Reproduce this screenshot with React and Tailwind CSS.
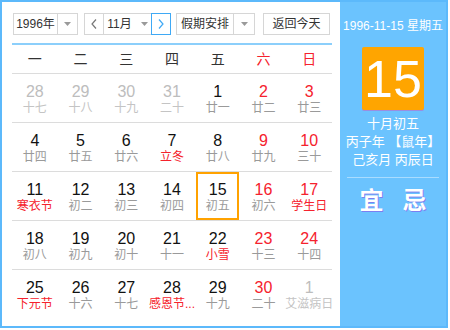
import React from "react";

const FONT = { fontFamily: '"Liberation Sans", "Noto Sans CJK SC", sans-serif' };

const rows = [
  [
    { d: "28", l: "十七", g: true },
    { d: "29", l: "十八", g: true },
    { d: "30", l: "十九", g: true },
    { d: "31", l: "二十", g: true },
    { d: "1", l: "廿一" },
    { d: "2", l: "廿二", w: true },
    { d: "3", l: "廿三", w: true },
  ],
  [
    { d: "4", l: "廿四" },
    { d: "5", l: "廿五" },
    { d: "6", l: "廿六" },
    { d: "7", l: "立冬", f: true },
    { d: "8", l: "廿八" },
    { d: "9", l: "廿九", w: true },
    { d: "10", l: "三十", w: true },
  ],
  [
    { d: "11", l: "寒衣节", f: true },
    { d: "12", l: "初二" },
    { d: "13", l: "初三" },
    { d: "14", l: "初四" },
    { d: "15", l: "初五", s: true },
    { d: "16", l: "初六", w: true },
    { d: "17", l: "学生日", w: true, f: true },
  ],
  [
    { d: "18", l: "初八" },
    { d: "19", l: "初九" },
    { d: "20", l: "初十" },
    { d: "21", l: "十一" },
    { d: "22", l: "小雪", f: true },
    { d: "23", l: "十三", w: true },
    { d: "24", l: "十四", w: true },
  ],
  [
    { d: "25", l: "下元节", f: true },
    { d: "26", l: "十六" },
    { d: "27", l: "十七" },
    { d: "28", l: "感恩节...", f: true },
    { d: "29", l: "十九" },
    { d: "30", l: "二十", w: true },
    { d: "1", l: "艾滋病日", g: true },
  ],
];

function Arrow() {
  return (
    <svg width="7" height="4" viewBox="0 0 7 4">
      <path d="M0 0 L7 0 L3.5 4 Z" fill="#9a9a9a" />
    </svg>
  );
}

function Cell({ c }) {
  const num = c.g ? "text-[#bdbdbd]" : c.w ? "text-[#f5222d]" : "text-[#111]";
  const lun = c.g ? "text-[#c4c4c4]" : c.f ? "text-[#f5222d]" : "text-[#9a9a9a]";
  return (
    <div className="flex justify-center">
      <div
        className={
          "flex flex-col items-center w-[43px] h-[48px] " +
          (c.s ? "border-2 border-[#ffa200] pt-[6px]" : "pt-[8px]")
        }
      >
        <div className={"text-[16px] leading-[19px] " + num}>{c.d}</div>
        <div className={"text-[12px] leading-[14px] whitespace-nowrap " + lun}>{c.l}</div>
      </div>
    </div>
  );
}

export default function App() {
  return (
    <div className="w-[450px] h-[330px] bg-white" style={FONT}>
      <div className="w-[448px] h-[328px] border-2 border-[#5cb9fb] flex">
        <div className="w-[338px] pl-[10px] pr-[8px] pt-[11px]">
          <div className="flex items-center h-[22px] text-[12px] text-[#333]">
            <div className="flex h-[22px] w-[65px] border border-[#d6d6d6] ml-[1px]">
              <div className="flex-1 flex items-center justify-center">1996年</div>
              <div className="w-[20px] border-l border-[#d6d6d6] flex items-center justify-center">
                <Arrow />
              </div>
            </div>
            <div className="flex h-[22px] w-[87px] border border-[#d6d6d6] ml-[6px]">
              <div className="w-[19px] flex items-center justify-center border-r border-[#d6d6d6]">
                <svg width="6" height="10" viewBox="0 0 6 10">
                  <path d="M5 0.5 L1 5 L5 9.5" fill="none" stroke="#777" strokeWidth="1.2" />
                </svg>
              </div>
              <div className="flex-1 flex items-center justify-center gap-[9px]">
                <span>11月</span>
                <Arrow />
              </div>
              <div className="w-[20px] -my-px -mr-px flex items-center justify-center border border-[#3fa9f5]">
                <svg width="6" height="10" viewBox="0 0 6 10">
                  <path d="M1 0.5 L5 5 L1 9.5" fill="none" stroke="#3fa9f5" strokeWidth="1.2" />
                </svg>
              </div>
            </div>
            <div className="flex h-[22px] w-[79px] border border-[#d6d6d6] ml-[5px]">
              <div className="flex-1 flex items-center justify-center">假期安排</div>
              <div className="w-[21px] border-l border-[#d6d6d6] flex items-center justify-center">
                <Arrow />
              </div>
            </div>
            <div className="flex h-[22px] w-[67px] border border-[#d6d6d6] ml-[8px] items-center justify-center">
              返回今天
            </div>
          </div>
          <div className="mt-[8px] border-t-2 border-[#8ccffb]" />
          <div className="grid grid-cols-7 h-[29px] items-center text-[14px] border-b border-[#dcdcdc]">
            {["一", "二", "三", "四", "五", "六", "日"].map((w, i) => (
              <div
                key={w}
                className={"text-center " + (i >= 5 ? "text-[#f5222d]" : "text-[#333]")}
              >
                {w}
              </div>
            ))}
          </div>
          {rows.map((r, i) => (
            <div
              key={i}
              className={"grid grid-cols-7 h-[49px] " + (i < 4 ? "border-b border-[#dcdcdc]" : "")}
            >
              {r.map((c, j) => (
                <Cell key={j} c={c} />
              ))}
            </div>
          ))}
        </div>
        <div className="flex-1 bg-[#6bc3fe] flex flex-col items-center text-white">
          <div className="mt-[17px] text-[12px] leading-[15px] whitespace-nowrap">1996-11-15 星期五</div>
          <div className="mt-[13px] w-[62px] h-[63px] bg-[#ffa500] rounded-[2px] flex items-center justify-center shadow-[0_1px_0_#9b8de0]">
            <span className="text-[52px] leading-none font-light">15</span>
          </div>
          <div className="mt-[5px] text-[13px] leading-[18px] text-center">
            <div>十月初五</div>
            <div>丙子年 【鼠年】</div>
            <div>己亥月 丙辰日</div>
          </div>
          <div className="mt-[8px] w-[92px] h-px bg-[#a9dcff]" />
          <div
            className="mt-[9px] flex gap-[19px] text-[24px] leading-[28px] font-bold"
            style={{ textShadow: "1px 1px 0 #7b7ff0" }}
          >
            <span>宜</span>
            <span>忌</span>
          </div>
        </div>
      </div>
    </div>
  );
}
